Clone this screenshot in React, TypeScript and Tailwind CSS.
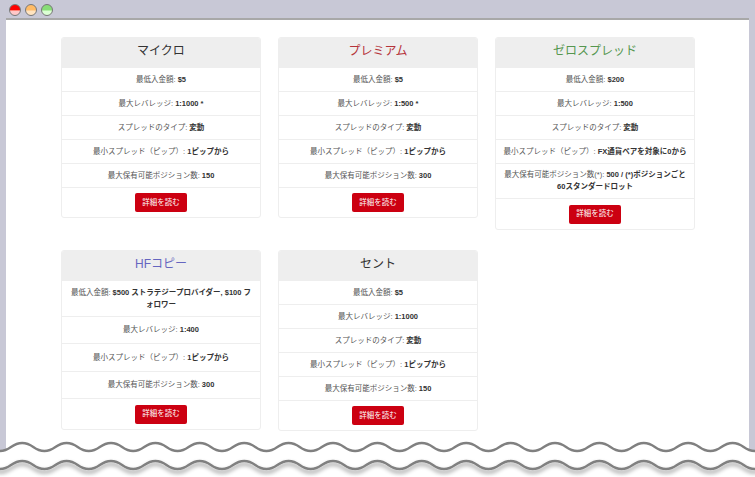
const font = "font-['Liberation_Sans','Noto_Sans_CJK_JP',sans-serif]";

type Row = { label: string; value: string; h: string };
type Plan = { title: string; color: string; rows: Row[]; button: string };

const plans: Plan[] = [
  {
    title: 'マイクロ',
    color: 'text-[#333333]',
    button: 'h-[30px]',
    rows: [
      { label: '最低入金額: ', value: '$5', h: 'h-6' },
      { label: '最大レバレッジ: ', value: '1:1000 *', h: 'h-6' },
      { label: 'スプレッドのタイプ: ', value: '変動', h: 'h-6' },
      { label: '最小スプレッド（ピップ）: ', value: '1ピップから', h: 'h-6' },
      { label: '最大保有可能ポジション数: ', value: '150', h: 'h-6' },
    ],
  },
  {
    title: 'プレミアム',
    color: 'text-[#b5333a]',
    button: 'h-[30px]',
    rows: [
      { label: '最低入金額: ', value: '$5', h: 'h-6' },
      { label: '最大レバレッジ: ', value: '1:500 *', h: 'h-6' },
      { label: 'スプレッドのタイプ: ', value: '変動', h: 'h-6' },
      { label: '最小スプレッド（ピップ）: ', value: '1ピップから', h: 'h-6' },
      { label: '最大保有可能ポジション数: ', value: '300', h: 'h-6' },
    ],
  },
  {
    title: 'ゼロスプレッド',
    color: 'text-[#55964f]',
    button: 'h-[31px]',
    rows: [
      { label: '最低入金額: ', value: '$200', h: 'h-6' },
      { label: '最大レバレッジ: ', value: '1:500', h: 'h-6' },
      { label: 'スプレッドのタイプ: ', value: '変動', h: 'h-6' },
      { label: '最小スプレッド（ピップ）: ', value: 'FX通貨ペアを対象に0から', h: 'h-6' },
      { label: '最大保有可能ポジション数(*): ', value: '500 / (*)ポジションごと\n60スタンダードロット', h: 'h-[35px]' },
    ],
  },
  {
    title: 'HFコピー',
    color: 'text-[#6565c0]',
    button: 'h-[31px]',
    rows: [
      { label: '最低入金額: ', value: '$500 ストラテジープロバイダー, $100 フ\nォロワー', h: 'h-9' },
      { label: '最大レバレッジ: ', value: '1:400', h: 'h-[27px]' },
      { label: '最小スプレッド（ピップ）: ', value: '1ピップから', h: 'h-7' },
      { label: '最大保有可能ポジション数: ', value: '300', h: 'h-[27px]' },
    ],
  },
  {
    title: 'セント',
    color: 'text-[#333333]',
    button: 'h-[30px]',
    rows: [
      { label: '最低入金額: ', value: '$5', h: 'h-6' },
      { label: '最大レバレッジ: ', value: '1:1000', h: 'h-6' },
      { label: 'スプレッドのタイプ: ', value: '変動', h: 'h-6' },
      { label: '最小スプレッド（ピップ）: ', value: '1ピップから', h: 'h-6' },
      { label: '最大保有可能ポジション数: ', value: '150', h: 'h-6' },
    ],
  },
];

const Card = ({ plan }: { plan: Plan }) => (
  <div className="self-start overflow-hidden rounded-[3px] border border-[#eeeeee] bg-white">
    <div className={`flex h-[29px] items-center justify-center bg-[#eeeeee] pb-[4px] text-[12px] ${plan.color}`}>
      {plan.title}
    </div>
    {plan.rows.map((row) => (
      <div
        key={row.label}
        className={`flex items-center justify-center border-t border-[#eeeeee] px-1 text-center text-[7.5px] leading-[12px] whitespace-pre-line text-[#555555] ${row.h}`}
      >
        <p>
          {row.label}
          <b className="text-[#333333]">{row.value}</b>
        </p>
      </div>
    ))}
    <div className={`flex items-center justify-center border-t border-[#eeeeee] ${plan.button}`}>
      <button className="h-[19px] w-[52px] rounded-[2px] bg-[#cc0011] text-[7.5px] text-white">詳細を読む</button>
    </div>
  </div>
);

const Light = ({ color }: { color: string }) => (
  <span className={`h-[12px] w-[12px] rounded-full border border-[#777777] bg-linear-to-b ${color}`} />
);

// repeated wave, one path per edge of the torn page
const wave = (y: number) => {
  let d = `M-44.4 ${y}`;
  for (let x = -44.4; x < 800; x += 44.4) {
    d += ` c11 0 11 -8 22.2 -8 s11 8 22.2 8`;
  }
  return d;
};

export default function App() {
  return (
    <div className={`relative flex h-[477px] w-[755px] flex-col overflow-hidden bg-[#c8c8d6] ${font}`}>
      <div className="flex h-[18px] shrink-0 items-center gap-[4px] pt-[2px] pl-[9px]">
        <Light color="from-[#ff0000] from-50% to-[#ffc8c8] to-60%" />
        <Light color="from-[#ffbb66] from-50% to-[#ffe4c0] to-60%" />
        <Light color="from-[#88dd77] from-50% to-[#dcffd4] to-60%" />
      </div>
      <div className="mx-[6px] flex-1 border-t-2 border-[#a8a8a8] bg-white">
        <div className="grid grid-cols-[200px_200px_200px] gap-x-[17px] gap-y-[20px] pt-[17px] pl-[55px]">
          {plans.map((plan) => (
            <Card key={plan.title} plan={plan} />
          ))}
        </div>
      </div>
      <svg className="absolute bottom-0 left-0" width="755" height="40" viewBox="0 437 755 40">
        <defs>
          <filter id="wave-shadow" x="-5%" y="-50%" width="110%" height="250%">
            <feDropShadow dx="0" dy="3" stdDeviation="2" floodColor="#000000" floodOpacity="0.45" />
          </filter>
        </defs>
        <path d={`${wave(451)} V477 H-46 Z`} fill="#ffffff" />
        <path d={wave(451)} fill="none" stroke="#808080" strokeWidth="2.4" />
        <path d={`${wave(469)} V477 H-46 Z`} fill="#ffffff" />
        <path d={wave(469)} fill="none" stroke="#808080" strokeWidth="2.4" filter="url(#wave-shadow)" />
      </svg>
    </div>
  );
}
